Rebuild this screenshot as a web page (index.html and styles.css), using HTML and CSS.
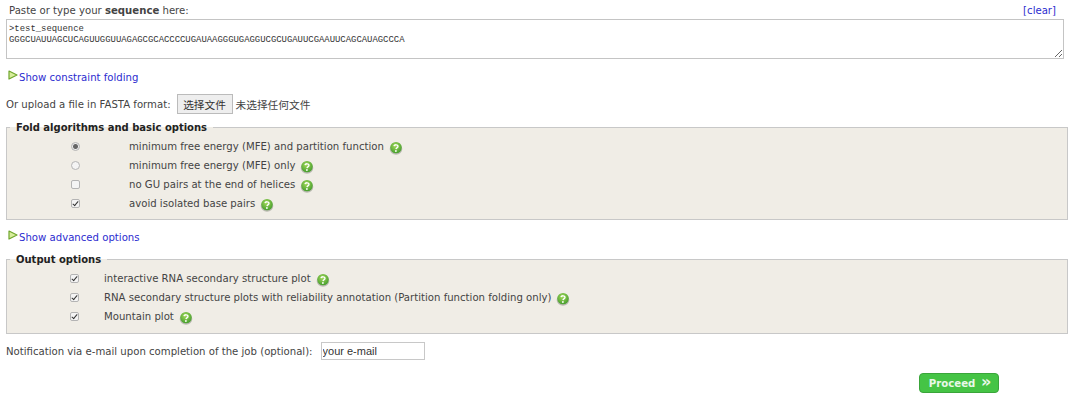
FILE: index.html
```html
<!DOCTYPE html>
<html lang="en">
<head>
    <meta charset="UTF-8">
    <title>RNAfold web server</title>
    <link rel="stylesheet" href="styles.css">
</head>
<body>
    <svg class="defs" width="0" height="0">
        <defs>
            <radialGradient id="ball" cx="45%" cy="35%" r="70%">
                <stop offset="0" stop-color="#a4d95a"/>
                <stop offset="1" stop-color="#3f9a2a"/>
            </radialGradient>
            <symbol id="help" viewBox="0 0 14 14">
                <ellipse cx="7" cy="8" rx="6.3" ry="5.8" fill="#b9b9b0"/>
                <circle cx="7" cy="6.6" r="5.7" fill="url(#ball)"/>
                <path d="M5 5.2 C5.4 3.4 9 3.4 8.9 5.4 C8.8 6.6 7.2 6.8 7 8.2" fill="none" stroke="#fff" stroke-width="1.5"/>
                <circle cx="6.9" cy="10" r="0.9" fill="#fff"/>
            </symbol>
            <symbol id="arrow" viewBox="0 0 10 10">
                <path d="M1 1 L9 5 L1 9 Z" fill="#d8ee9c" stroke="#6fa52c" stroke-width="1.2" stroke-linejoin="round"/>
            </symbol>
        </defs>
    </svg>

    <form class="page">
        <div class="seq-head">
            <label class="seq-label">Paste or type your <b>sequence</b> here:</label>
            <a class="link" href="#">[clear]</a>
        </div>
        <textarea class="seq-input" spellcheck="false">&gt;test_sequence
GGGCUAUUAGCUCAGUUGGUUAGAGCGCACCCCUGAUAAGGGUGAGGUCGCUGAUUCGAAUUCAGCAUAGCCCA</textarea>

        <div class="toggle toggle-first">
            <svg class="arrow"><use href="#arrow"/></svg>
            <a class="link" href="#">Show constraint folding</a>
        </div>

        <div class="upload">
            <span>Or upload a file in FASTA format:</span>
            <button type="button" class="file-btn">选择文件</button>
            <span class="file-name">未选择任何文件</span>
        </div>

        <fieldset class="box box-fold">
            <legend>Fold algorithms and basic options</legend>
            <div class="opt"><span class="radio on"></span><span>minimum free energy (MFE) and partition function</span><svg class="help"><use href="#help"/></svg></div>
            <div class="opt"><span class="radio"></span><span>minimum free energy (MFE) only</span><svg class="help"><use href="#help"/></svg></div>
            <div class="opt"><span class="check"></span><span>no GU pairs at the end of helices</span><svg class="help"><use href="#help"/></svg></div>
            <div class="opt"><span class="check on"></span><span>avoid isolated base pairs</span><svg class="help"><use href="#help"/></svg></div>
        </fieldset>

        <div class="toggle toggle-adv">
            <svg class="arrow"><use href="#arrow"/></svg>
            <a class="link" href="#">Show advanced options</a>
        </div>

        <fieldset class="box box-output">
            <legend>Output options</legend>
            <div class="opt"><span class="check on"></span><span>interactive RNA secondary structure plot</span><svg class="help"><use href="#help"/></svg></div>
            <div class="opt"><span class="check on"></span><span>RNA secondary structure plots with reliability annotation (Partition function folding only)</span><svg class="help"><use href="#help"/></svg></div>
            <div class="opt"><span class="check on"></span><span>Mountain plot</span><svg class="help"><use href="#help"/></svg></div>
        </fieldset>

        <div class="notify">
            <span>Notification via e-mail upon completion of the job (optional):</span>
            <input class="email" type="text" value="your e-mail">
        </div>

        <div class="actions">
            <button type="button" class="proceed">Proceed <span class="chev">»</span></button>
        </div>
    </form>
</body>
</html>
```

FILE: styles.css
```css
html, body {
    margin: 0;
    padding: 0;
    background: #fff;
    height: 402px;
    overflow: hidden;
}
body {
    font-family: "DejaVu Sans", Verdana, sans-serif;
    font-size: 10.15px;
    color: #444;
}
.defs {
    display: block;
    height: 0;
}
.page {
    display: flex;
    flex-direction: column;
    padding: 0 12px 0 6px;
}
.link {
    color: #2c2ccf;
    text-decoration: none;
}
.seq-head {
    display: flex;
    justify-content: space-between;
    align-items: center;
    height: 19px;
    padding: 2px 12px 0 3px;
    box-sizing: border-box;
}
.seq-input {
    display: block;
    box-sizing: border-box;
    width: 1058px;
    height: 40px;
    margin: 0;
    padding: 4px 2px 0;
    border: 1px solid #c4c4c4;
    font-family: "Liberation Mono", monospace;
    font-size: 8.92px;
    line-height: 11px;
    color: #333;
    overflow: hidden;
}
.toggle {
    display: flex;
    align-items: center;
    gap: 1px;
    padding-left: 2px;
    height: 14px;
    font-size: 10.15px;
}
.toggle-first {
    margin-top: 11px;
}
.toggle-adv {
    margin-top: 10px;
}
.arrow {
    width: 10px;
    height: 10px;
    margin-top: -5px;
}
.upload {
    display: flex;
    align-items: center;
    margin-top: 10px;
    height: 20px;
}
.file-btn {
    box-sizing: border-box;
    width: 56px;
    height: 20px;
    margin: 0 3px 0 6px;
    padding: 0;
    border: 1px solid #bbb;
    background: #eee;
    color: #333;
    font-family: "Noto Sans CJK SC", sans-serif;
    font-size: 10.7px;
}
.file-name {
    font-family: "Noto Sans CJK SC", sans-serif;
    font-size: 10.7px;
}
.box {
    box-sizing: border-box;
    width: 1062px;
    margin: 0;
    padding: 0;
    border: 1px solid #c8c8c8;
    background: #f0ede6;
}
.box legend {
    margin-left: 3px;
    padding: 0 6px 0 6px;
    font-weight: bold;
    font-size: 10px;
    line-height: 13px;
    color: #222;
}
.box-fold {
    margin-top: 7px;
    height: 99px;
    padding-top: 3px;
}
.box-output {
    margin-top: 9px;
    height: 81px;
    padding-top: 3px;
}
.opt {
    display: grid;
    align-items: center;
    height: 19px;
}
.box-fold .opt {
    grid-template-columns: 122px auto 1fr;
    padding-left: 0;
}
.box-output .opt {
    grid-template-columns: 97px auto 1fr;
}
.help {
    width: 14px;
    height: 14px;
    margin: 2px 0 0 5px;
}
.radio, .check {
    box-sizing: border-box;
    display: block;
    width: 9px;
    height: 9px;
    border: 1px solid #b4b4b4;
    background: #f4f4f4;
}
.box-fold .radio, .box-fold .check {
    margin-left: 64px;
}
.box-output .check {
    margin-left: 63px;
}
.radio {
    border-radius: 50%;
}
.radio.on {
    background: radial-gradient(circle, #666 0, #666 2px, #eee 3px);
}
.check {
    border-radius: 2px;
    position: relative;
}
.check.on::after {
    content: "";
    position: absolute;
    left: 2px;
    top: 0;
    width: 2px;
    height: 5px;
    border: solid #333;
    border-width: 0 1.5px 1.5px 0;
    transform: rotate(40deg);
}
.notify {
    display: flex;
    align-items: center;
    margin-top: 8px;
    height: 18px;
}
.email {
    box-sizing: border-box;
    width: 104px;
    height: 18px;
    margin: 0 0 0 8px;
    padding: 0 1px;
    border: 1px solid #c8c8c8;
    font-family: "Liberation Sans", Arial, sans-serif;
    font-size: 11px;
    color: #333;
}
.actions {
    display: flex;
    justify-content: flex-end;
    margin-top: 13px;
    padding-right: 69px;
}
.proceed {
    box-sizing: border-box;
    width: 80px;
    height: 20px;
    padding: 0 0 0 2px;
    border: 1px solid #3aa53a;
    border-radius: 4px;
    background: #45c445;
    color: #e8f8e8;
    font-family: "DejaVu Sans", Verdana, sans-serif;
    font-size: 10.2px;
    font-weight: bold;
}
.chev {
    font-size: 16px;
    line-height: 10px;
    margin-left: 2px;
}
```
